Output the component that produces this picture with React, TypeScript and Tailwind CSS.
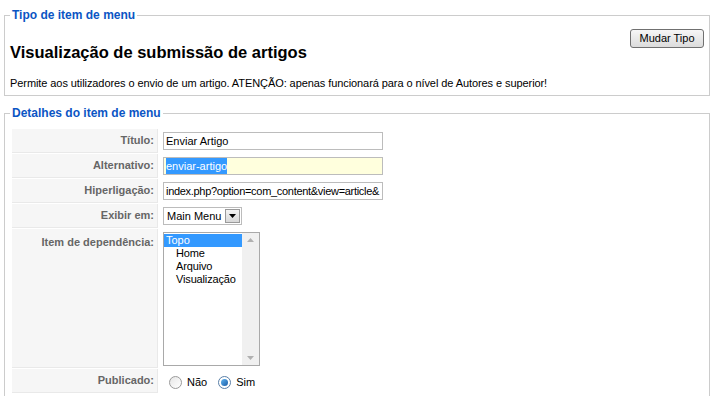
import React from "react";

const FONT = { fontFamily: "'Liberation Sans', Arial, sans-serif" };

function Row({ label, tall, children }: { label: string; tall?: boolean; children: React.ReactNode }) {
  return (
    <div className="flex gap-[2px]">
      <div
        className={`w-[146px] shrink-0 bg-[#f6f6f6] border-b border-r border-[#e9e9e9] pr-[3px] text-right text-[11px] font-bold text-[#666] ${tall ? "h-[139px] pt-[5px]" : "h-[24px] leading-[23px]"}`}
      >
        {label}
      </div>
      <div className={`flex ${tall ? "items-start pt-[3px]" : "items-center"} pl-[3px]`}>{children}</div>
    </div>
  );
}

function TextBox({ children, yellow }: { children: React.ReactNode; yellow?: boolean }) {
  return (
    <div
      className={`flex h-[18px] w-[220px] items-center overflow-hidden whitespace-nowrap border border-[#bcbcbc] px-[2px] text-[11px] text-black ${yellow ? "bg-[#ffffdd]" : "bg-white"}`}
    >
      {children}
    </div>
  );
}

export default function App() {
  const parents = ["Home", "Arquivo", "Visualização"];
  return (
    <div className="h-[396px] w-[715px] overflow-hidden bg-white pt-[8px] pl-[4px]" style={FONT}>
      <fieldset className="w-[706px] border border-[#cccccc] px-[5px] pb-[5px]">
        <legend className="px-[2px] text-[12px] font-bold leading-[14px] text-[#0b55c4]">Tipo de item de menu</legend>
        <div className="flex items-start justify-between pt-[7px]">
          <h1 className="pt-[13px] text-[16.5px] font-bold leading-[20px] text-black">Visualização de submissão de artigos</h1>
          <button className="h-[19px] w-[74px] rounded-[3px] border border-[#707070] bg-gradient-to-b from-[#f6f6f6] to-[#dcdcdc] text-[11px] text-black">
            Mudar Tipo
          </button>
        </div>
        <p className="pt-[14px] text-[11px] leading-[14px] tracking-[-0.08px] text-black">
          Permite aos utilizadores o envio de um artigo. ATENÇÃO: apenas funcionará para o nível de Autores e superior!
        </p>
      </fieldset>

      <fieldset className="mt-[10px] h-[310px] w-[706px] border border-[#cccccc] pl-[7px] pt-[9px]">
        <legend className="ml-[-2px] px-[2px] text-[12px] font-bold leading-[14px] text-[#0b55c4]">Detalhes do item de menu</legend>
        <div className="flex flex-col gap-[1px]">
          <Row label="Título:">
            <TextBox>Enviar Artigo</TextBox>
          </Row>
          <Row label="Alternativo:">
            <TextBox yellow>
              <span className="bg-[#3399ff] text-white">enviar-artigo</span>
            </TextBox>
          </Row>
          <Row label="Hiperligação:">
            <TextBox>
              <span className="tracking-[-0.3px]">index.php?option=com_content&amp;view=article&amp;</span>
            </TextBox>
          </Row>
          <Row label="Exibir em:">
            <div className="flex h-[18px] items-center border border-[#bcbcbc] bg-white pl-[3px] text-[11px] text-black">
              <span className="pr-[4px]">Main Menu</span>
              <span className="mr-[1px] flex h-[14px] w-[15px] items-center justify-center border border-[#9a9a9a] bg-gradient-to-b from-[#f4f4f4] to-[#d8d8d8]">
                <svg width="7" height="4" viewBox="0 0 7 4"><path d="M0 0h7L3.5 4z" fill="#000" /></svg>
              </span>
            </div>
          </Row>
          <Row label="Item de dependência:" tall>
            <div className="flex h-[134px] w-[97px] border border-[#a9a9a9] bg-white text-[11px] leading-[13px] text-black">
              <div className="min-w-0 flex-1 pt-[1px]">
                <div className="bg-[#3399ff] pl-[2px] text-white">Topo</div>
                {parents.map((p) => (
                  <div key={p} className="whitespace-nowrap pl-[12px] tracking-[-0.15px]">{p}</div>
                ))}
              </div>
              <div className="flex w-[17px] shrink-0 flex-col items-center justify-between bg-[#f0f0f0] py-[5px]">
                <svg width="7" height="4" viewBox="0 0 7 4"><path d="M0 4h7L3.5 0z" fill="#b0b0b0" /></svg>
                <svg width="7" height="4" viewBox="0 0 7 4"><path d="M0 0h7L3.5 4z" fill="#b0b0b0" /></svg>
              </div>
            </div>
          </Row>
          <Row label="Publicado:">
            <div className="flex items-center gap-[5px] pl-[6px] pt-[3px] text-[11px] text-black">
              <span className="h-[13px] w-[13px] rounded-full border border-[#9a9a9a] bg-gradient-to-br from-[#e6e6e6] to-white" />
              <span className="mr-[6px]">Não</span>
              <span className="flex h-[13px] w-[13px] items-center justify-center rounded-full border border-[#5a7fa8] bg-white">
                <span className="h-[7px] w-[7px] rounded-full bg-gradient-to-br from-[#5fb4f0] to-[#1a5da8]" />
              </span>
              <span>Sim</span>
            </div>
          </Row>
        </div>
      </fieldset>
    </div>
  );
}
